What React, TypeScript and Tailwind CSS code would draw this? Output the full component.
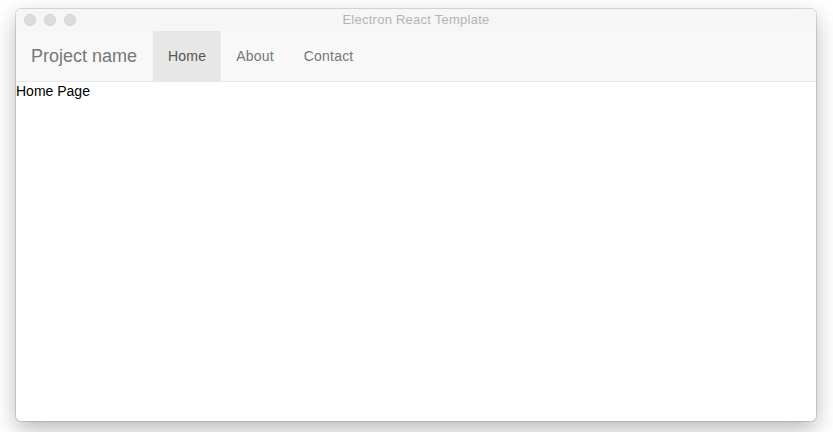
export default function App() {
  return (
    <div className="w-[833px] h-[432px] bg-white pt-[9px] pl-[16px] font-['Liberation_Sans',Arial,sans-serif]">
      <div className="w-[800px] h-[412px] bg-white rounded-[5px] overflow-hidden shadow-[0_0_0_1px_rgba(0,0,0,0.12),0_8px_22px_rgba(0,0,0,0.28)] flex flex-col">
        {/* title bar */}
        <div className="relative h-[22px] bg-[#f6f6f6] flex items-center justify-center">
          <div className="absolute left-[8px] top-[5px] flex gap-[8px]">
            <span className="w-[12px] h-[12px] rounded-full bg-[#dcdcdc] border border-[#d0d0d0]" />
            <span className="w-[12px] h-[12px] rounded-full bg-[#dcdcdc] border border-[#d0d0d0]" />
            <span className="w-[12px] h-[12px] rounded-full bg-[#dcdcdc] border border-[#d0d0d0]" />
          </div>
          <span className="text-[13px] tracking-[0.25px] text-[#b4b4b4]">Electron React Template</span>
        </div>

        {/* navbar */}
        <nav className="h-[51px] bg-[#f8f8f8] border-b border-[#e7e7e7] flex items-stretch">
          <a className="pl-[15px] pr-[16px] flex items-center text-[18px] text-[#777]">Project name</a>
          <a className="px-[15px] flex items-center text-[14px] tracking-[0.2px] text-[#555] bg-[#e7e7e7]">Home</a>
          <a className="px-[15px] flex items-center text-[14px] tracking-[0.2px] text-[#777]">About</a>
          <a className="px-[15px] flex items-center text-[14px] tracking-[0.2px] text-[#777]">Contact</a>
        </nav>

        <div className="flex-1 text-[14px] leading-[19px] text-black">Home Page</div>
      </div>
    </div>
  );
}
